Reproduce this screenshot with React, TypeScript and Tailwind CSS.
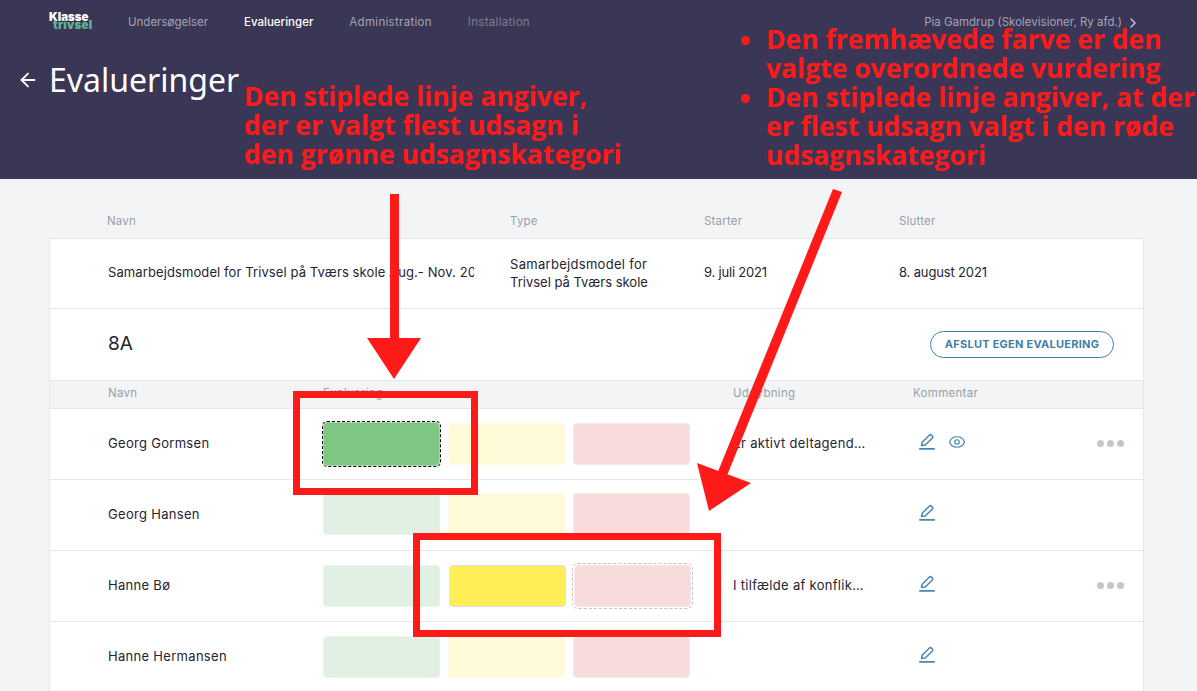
import React from "react";
import { Eye, ArrowLeft, ChevronRight } from "lucide-react";

function PenIcon() {
  return (
    <svg width="16" height="18" viewBox="0 0 16 18" fill="none" stroke="#4a86b3" strokeWidth="1.5" strokeLinejoin="round" strokeLinecap="round">
      <path d="M2.5 12.5 L3.2 9.3 L10.2 2.2 C10.9 1.5 11.9 1.5 12.6 2.2 L13.2 2.8 C13.9 3.5 13.9 4.5 13.2 5.2 L6.2 12 Z" />
      <path d="M0.8 15.8 H15.2" strokeWidth="1.7" />
    </svg>
  );
}

function Bar({ color, outline, size }: { color: string; outline?: string; size?: string }) {
  return (
    <div className={`${size ?? "h-[42px]"} w-[117px] rounded-[4px] border ${color} ${outline ?? ""}`} />
  );
}

function Dots() {
  return (
    <div className="mb-[2px] flex gap-[3px]">
      <span className="h-[7px] w-[7px] rounded-full bg-[#c3c7cd]" />
      <span className="h-[7px] w-[7px] rounded-full bg-[#c3c7cd]" />
      <span className="h-[7px] w-[7px] rounded-full bg-[#c3c7cd]" />
    </div>
  );
}

type RowProps = {
  name: string;
  green?: string;
  yellow?: string;
  red?: string;
  greenOutline?: string;
  redOutline?: string;
  greenSize?: string;
  yellowShift?: string;
  barsShift?: string;
  text?: string;
  eye?: boolean;
  dots?: boolean;
};

function Row({ name, green, yellow, red, greenOutline, redOutline, greenSize, yellowShift, barsShift, text, eye, dots }: RowProps) {
  return (
    <div className="flex h-[71px] items-center border-b border-[#e5e7eb] pl-[58px] pr-[19px] text-[13px] tracking-[0.3px] text-[#1f2430]">
      <div className="w-[215px]">{name}</div>
      <div className={`flex w-[410px] items-center gap-2 ${barsShift ?? ""}`}>
        <Bar color={green ?? "border-[#e8f3ea] bg-[#e0f0e3]"} outline={greenOutline} size={greenSize} />
        <div className={yellowShift}>
          <Bar color={yellow ?? "border-[#fffbe3] bg-[#fffad8]"} />
        </div>
        <Bar color={red ?? "border-[#f9e6e6] bg-[#f8dcdc]"} outline={redOutline} />
      </div>
      <div className="w-[180px] truncate pr-[46px]">{text}</div>
      <div className="mb-[4px] flex w-[183px] items-center gap-[13px] pl-[6px]">
        <PenIcon />
        {eye && <Eye size={18} strokeWidth={1.6} color="#4a86b3" />}
      </div>
      <div className="flex w-[28px] justify-end">{dots && <Dots />}</div>
    </div>
  );
}

export default function App() {
  return (
    <div className="relative h-[691px] w-[1197px] overflow-hidden bg-[#f3f4f6] font-['Inter',sans-serif]">
      <header className="h-[179px] bg-[#3a3655]">
        <div className="flex h-[44px] items-center pl-[49px] pr-[56px] pt-[2px] text-[11.5px] text-[#a5a3b4]">
          <div className="mr-[35px] -mt-[4px] flex w-[44px] flex-col text-[11.5px] font-black leading-[8px]">
            <span className="text-white">Klasse</span>
            <span className="pl-[4px] tracking-[0.3px] text-[#5fb592]">trivsel</span>
          </div>
          <nav className="flex gap-[36px]">
            <a>Undersøgelser</a>
            <a className="font-medium text-white">Evalueringer</a>
            <a className="tracking-[0.3px]">Administration</a>
            <a className="tracking-[0.3px] text-[#807d92]">Installation</a>
          </nav>
          <div className="ml-auto flex items-center gap-[3px]">
            <span>Pia Gamdrup (Skolevisioner, Ry afd.)</span>
            <ChevronRight size={16} strokeWidth={2} color="#c9c8d2" />
          </div>
        </div>
        <div className="flex items-center gap-[10px] pl-[17px] pt-[15px] font-['Noto_Sans',sans-serif] text-white">
          <ArrowLeft size={22} strokeWidth={2} />
          <h1 className="text-[32px] font-normal leading-[42px]">Evalueringer</h1>
        </div>
      </header>

      <main className="pl-[49px] pr-[53px] pt-[34px]">
        <div className="flex h-[25px] items-start pl-[58px] text-[11.5px] tracking-[0.2px] text-[#9a9ea6]">
          <div className="w-[403px]">Navn</div>
          <div className="w-[194px]">Type</div>
          <div className="w-[195px]">Starter</div>
          <div>Slutter</div>
        </div>
        <section className="border border-[#e5e7eb] bg-white">
          <div className="flex h-[70px] items-center border-b border-[#e5e7eb] pb-[2px] pl-[58px] text-[13px] text-[#1f2430]">
            <div className="mr-[36px] w-[366px] overflow-hidden whitespace-nowrap tracking-[0.1px]">Samarbejdsmodel for Trivsel på Tværs skole Aug.- Nov. 2021</div>
            <div className="flex w-[194px] flex-col leading-[18px]">
              <span className="tracking-[0.3px]">Samarbejdsmodel for</span>
              <span>Trivsel på Tværs skole</span>
            </div>
            <div className="w-[195px] tracking-[-0.2px]">9. juli 2021</div>
            <div className="tracking-[-0.15px]">8. august 2021</div>
          </div>
          <div className="flex h-[71px] items-center justify-between pl-[58px] pr-[29px]">
            <h2 className="text-[19px] font-normal text-[#1f2430]">8A</h2>
            <button className="h-[27px] w-[184px] rounded-full border border-[#3f7fa8] text-[11px] font-bold tracking-[0.25px] text-[#3f7fa8]">AFSLUT EGEN EVALUERING</button>
          </div>
          <div className="flex h-[29px] items-center border-y border-[#e5e7eb] bg-[#f3f4f6] pb-[2px] pl-[58px] text-[11.5px] tracking-[0.3px] text-[#9a9ea6]">
            <div className="w-[215px]">Navn</div>
            <div className="w-[410px]">Evaluering</div>
            <div className="w-[180px]">Uddybning</div>
            <div>Kommentar</div>
          </div>
          <Row name="Georg Gormsen" green="border-[#a5d6a7] bg-[#81c784]" greenOutline="outline-1 outline-dashed outline-black" greenSize="h-[44px]" text="Er aktivt deltagende i..." eye dots />
          <Row name="Georg Hansen" barsShift="mb-[2px]" />
          <Row name="Hanne Bø" yellow="border-[#e0e0e0] bg-[#ffee58]" yellowShift="ml-[1px]" redOutline="outline-1 outline-offset-1 outline-dashed outline-[#c4c4c4]" text="I tilfælde af konflikter..." dots />
          <Row name="Hanne Hermansen" />
        </section>
      </main>

      {/* Annotations laid over the screenshot */}
      <div className="absolute left-[244px] top-[82px] font-['Open_Sans',sans-serif] text-[26.5px] font-bold leading-[29px] text-[#ff1a1a]">
        <p>Den stiplede linje angiver,</p>
        <p>der er valgt flest udsagn i</p>
        <p>den grønne udsagnskategori</p>
      </div>
      <ul className="absolute left-[766px] top-[25px] w-[431px] list-disc font-['Open_Sans',sans-serif] text-[26.5px] font-bold leading-[29px] text-[#ff1a1a]">
        <li>Den fremhævede farve er den<br />valgte overordnede vurdering</li>
        <li>Den stiplede linje angiver, at der<br />er flest udsagn valgt i den røde<br />udsagnskategori</li>
      </ul>
      <div className="absolute left-[293px] top-[391px] h-[104px] w-[185px] border-[7px] border-[#ff1a1a]" />
      <div className="absolute left-[413px] top-[533px] h-[104px] w-[308px] border-[7px] border-[#ff1a1a]" />
      <svg className="absolute left-0 top-0" width="1197" height="691" viewBox="0 0 1197 691" fill="#ff1a1a">
        <rect x="390" y="194" width="9" height="146" />
        <polygon points="367,338 421,338 394,379" />
        <polygon points="833,189 842,192 726,478 717,474" />
        <polygon points="697,463 751,483 709,511" />
      </svg>
    </div>
  );
}
